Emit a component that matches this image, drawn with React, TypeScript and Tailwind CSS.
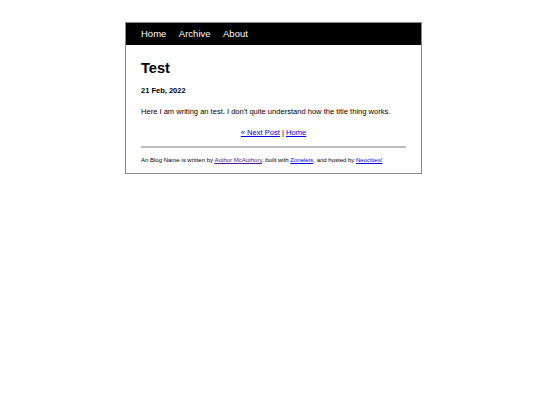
export default function App() {
  return (
    <div className="min-h-[405px] bg-white pt-[22px] font-['Liberation_Sans',Arial,sans-serif] text-black">
      <div className="ml-[125px] w-[297px] border border-[#8a8a8a]">
        <nav className="flex h-[22px] items-center gap-[12.5px] bg-black px-[15px] pt-px text-[9.5px] text-white">
          <a href="#">Home</a>
          <a href="#">Archive</a>
          <a href="#">About</a>
        </nav>
        <main className="px-[15px] pb-[9px]">
          <h1 className="mt-[14px] text-[14.6px] leading-[18px] font-bold">Test</h1>
          <h4 className="mt-[9px] text-[7.5px] leading-[10px] font-bold">21 Feb, 2022</h4>
          <p className="mt-[11px] text-[7.55px] leading-[10px]">
            Here I am writing an test. I don't quite understand how the title thing works.
          </p>
          <div className="mt-[11px] text-center text-[7.55px] leading-[10px]">
            <a href="#" className="text-[#0000ee] underline">« Next Post</a> |{" "}
            <a href="#" className="text-[#0000ee] underline">Home</a>
          </div>
          <hr className="mt-[8px] border-t-2 border-[#bdbdbd]" />
          <footer className="mt-[8px] text-[6px] leading-[8px]">
            An Blog Name is written by{" "}
            <a href="#" className="text-[#551a8b] underline">Author McAuthory</a>, built with{" "}
            <a href="#" className="text-[#0000ee] underline">Zonelets</a>, and hosted by{" "}
            <a href="#" className="text-[#0000ee] underline">Neocities!</a>
          </footer>
        </main>
      </div>
    </div>
  );
}
